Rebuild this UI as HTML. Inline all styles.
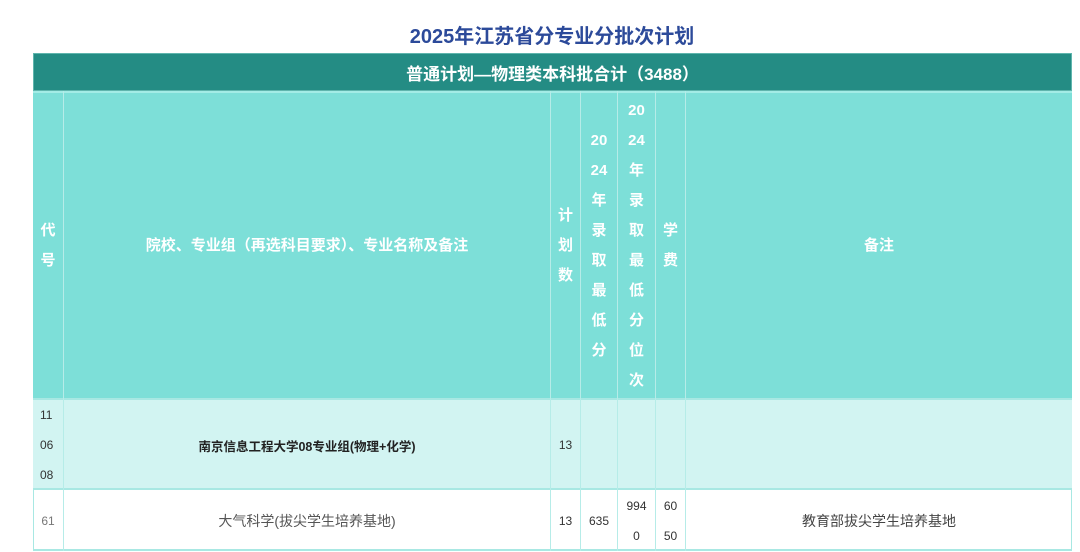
<!DOCTYPE html><html><head><meta charset="utf-8"><style>
body{margin:0;width:1080px;height:552px;background:#fff;position:relative;overflow:hidden;font-family:"Liberation Sans","Noto Sans CJK SC",sans-serif}
.a{position:absolute;box-sizing:border-box}
.t{left:0;width:1080px;top:20px;text-align:center;font-size:20px;font-weight:bold;color:#2c4a9a;padding-left:24px}
.c{display:flex;align-items:center;justify-content:center;text-align:center}
.hd{color:#fff;font-weight:bold;font-size:15px;line-height:30px}
</style></head><body>
<div class="a t">2025年江苏省分专业分批次计划</div>
<div class="a c" style="left:33px;top:53px;width:1039px;height:38px;background:#248c84;color:#fff;font-weight:bold;font-size:17px;border:1px solid #5fb5ad">普通计划—物理类本科批合计（3488）</div>
<div class="a" style="left:33px;top:91px;width:1039px;height:307px;background:#7ddfd8;border-top:2px solid #a3ece6"></div>
<div class="a" style="left:33px;top:398px;width:1039px;height:92px;background:#d2f4f2;border-top:2px solid #a8e8e3;border-bottom:2px solid #a8e8e3"></div>
<div class="a" style="left:33px;top:490px;width:1039px;height:61px;background:#fff;border-bottom:2px solid #a8e8e3;border-left:1px solid #a8e8e3;border-right:1px solid #a8e8e3"></div>
<div class="a" style="left:63px;top:91px;width:1px;height:460px;background:#b6ece8"></div>
<div class="a" style="left:550px;top:91px;width:1px;height:460px;background:#b6ece8"></div>
<div class="a" style="left:580px;top:91px;width:1px;height:460px;background:#b6ece8"></div>
<div class="a" style="left:617px;top:91px;width:1px;height:460px;background:#b6ece8"></div>
<div class="a" style="left:655px;top:91px;width:1px;height:460px;background:#b6ece8"></div>
<div class="a" style="left:685px;top:91px;width:1px;height:460px;background:#b6ece8"></div>
<div class="a c hd" style="left:33px;top:93px;width:30px;height:305px">代<br>号</div>
<div class="a c hd" style="left:64px;top:93px;width:486px;height:305px">院校、专业组（再选科目要求）、专业名称及备注</div>
<div class="a c hd" style="left:551px;top:93px;width:29px;height:305px">计<br>划<br>数</div>
<div class="a c hd" style="left:581px;top:93px;width:36px;height:305px">20<br>24<br>年<br>录<br>取<br>最<br>低<br>分</div>
<div class="a c hd" style="left:618px;top:93px;width:37px;height:305px">20<br>24<br>年<br>录<br>取<br>最<br>低<br>分<br>位<br>次</div>
<div class="a c hd" style="left:656px;top:93px;width:29px;height:305px">学<br>费</div>
<div class="a c hd" style="left:686px;top:93px;width:386px;height:305px">备注</div>
<div class="a" style="left:40px;top:400px;font-size:12px;line-height:30px;color:#333">11<br>06<br>08</div>
<div class="a c" style="left:64px;top:400px;width:486px;height:90px;font-size:12.5px;font-weight:bold;color:#222">南京信息工程大学08专业组(物理+化学)</div>
<div class="a c" style="left:551px;top:400px;width:29px;height:90px;font-size:12px;color:#333">13</div>
<div class="a c" style="left:33px;top:492px;width:30px;height:58px;font-size:12px;color:#777">61</div>
<div class="a c" style="left:64px;top:492px;width:486px;height:58px;font-size:14px;color:#555">大气科学(拔尖学生培养基地)</div>
<div class="a c" style="left:551px;top:492px;width:29px;height:58px;font-size:12px;color:#333">13</div>
<div class="a c" style="left:581px;top:492px;width:36px;height:58px;font-size:12px;color:#333">635</div>
<div class="a c" style="left:618px;top:492px;width:37px;height:58px;font-size:12px;color:#333;line-height:30px">994<br>0</div>
<div class="a c" style="left:656px;top:492px;width:29px;height:58px;font-size:12px;color:#333;line-height:30px">60<br>50</div>
<div class="a c" style="left:686px;top:492px;width:386px;height:58px;font-size:14px;color:#444">教育部拔尖学生培养基地</div>
</body></html>
